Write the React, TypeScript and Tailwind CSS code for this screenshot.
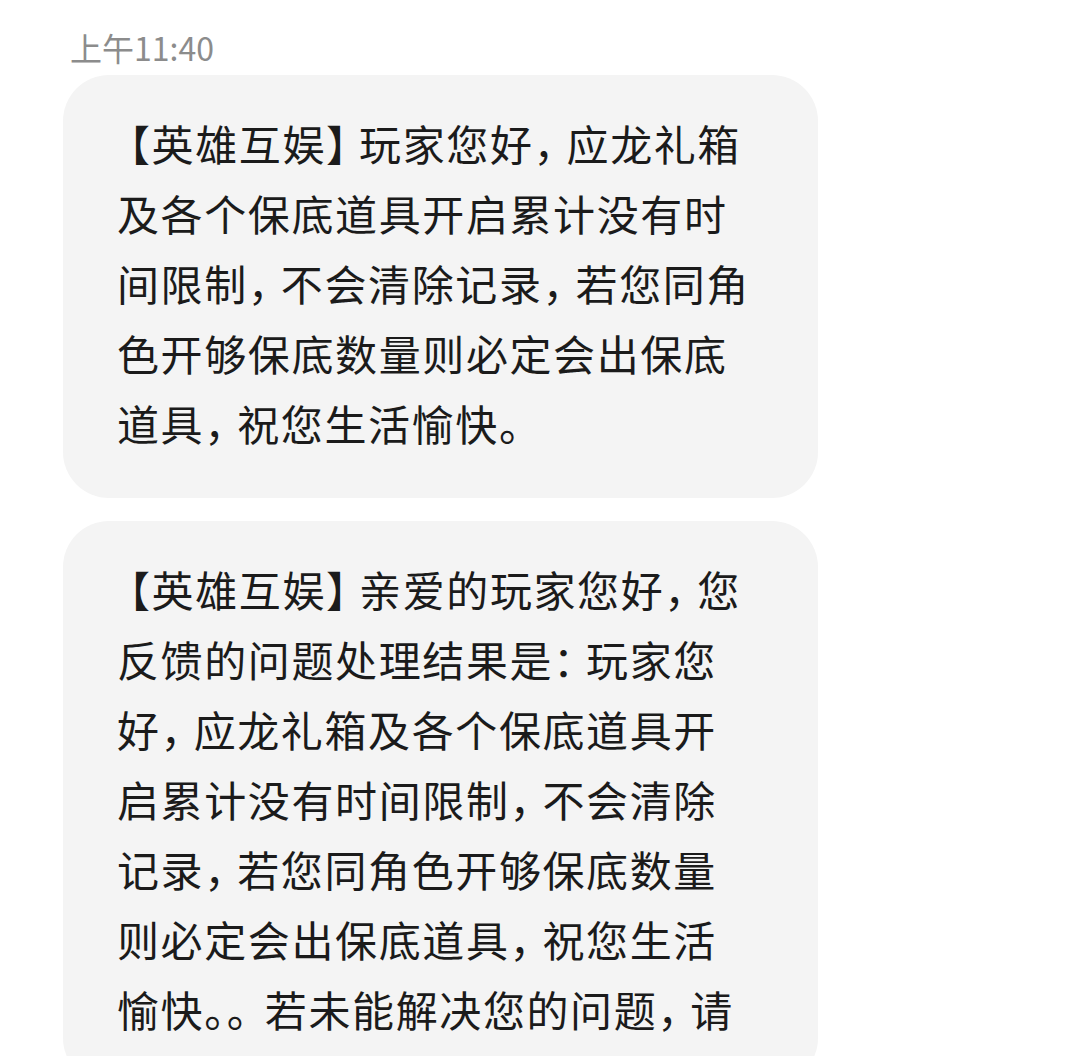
import React from 'react';

const FONT = '"Noto Sans CJK SC", "Noto Sans", sans-serif';

// punctuation in the source font is narrower than a full CJK cell
const renderLine = (line: string) => {
  const chars = Array.from(line);
  return chars.map((ch, i) => {
    if (ch === '【') {
      return (
        <span key={i} className="-ml-[9px]">
          {ch}
        </span>
      );
    }
    // the browser already trims the first of two adjacent marks
    if (ch === '。' && chars[i + 1] === '。') {
      return <span key={i}>{ch}</span>;
    }
    if (ch === '。' && chars[i - 1] === '。') {
      return (
        <span key={i} className="tracking-[-4px]">
          {ch}
        </span>
      );
    }
    if ('，：。】'.includes(ch)) {
      return (
        <span key={i} className="tracking-[-9px]">
          {ch}
        </span>
      );
    }
    return <span key={i}>{ch}</span>;
  });
};

const messages: string[][] = [
  [
    '【英雄互娱】玩家您好，应龙礼箱',
    '及各个保底道具开启累计没有时',
    '间限制，不会清除记录，若您同角',
    '色开够保底数量则必定会出保底',
    '道具，祝您生活愉快。',
  ],
  [
    '【英雄互娱】亲爱的玩家您好，您',
    '反馈的问题处理结果是：玩家您',
    '好，应龙礼箱及各个保底道具开',
    '启累计没有时间限制，不会清除',
    '记录，若您同角色开够保底数量',
    '则必定会出保底道具，祝您生活',
    '愉快。。若未能解决您的问题，请',
  ],
];

const Bubble = ({ lines }: { lines: string[] }) => (
  <div className="w-[755px] rounded-[46px] bg-[#f4f4f4] pl-[54px] pt-[33px] pb-[40px]">
    {lines.map((line, i) => (
      <div
        key={i}
        className="whitespace-nowrap text-[42px] leading-[70px] tracking-[1.6px] text-[#1b1b1b]"
      >
        {renderLine(line)}
      </div>
    ))}
  </div>
);

export default function App() {
  return (
    <div className="h-[1056px] w-[1080px] overflow-hidden bg-white" style={{ fontFamily: FONT }}>
      <div className="pl-[70px] pt-[27px] text-[32px] leading-[40px] text-[#8c8c8c]">
        上午11:40
      </div>
      <div className="ml-[63px] mt-[8px] flex flex-col gap-[23px]">
        {messages.map((lines, i) => (
          <Bubble key={i} lines={lines} />
        ))}
      </div>
    </div>
  );
}
